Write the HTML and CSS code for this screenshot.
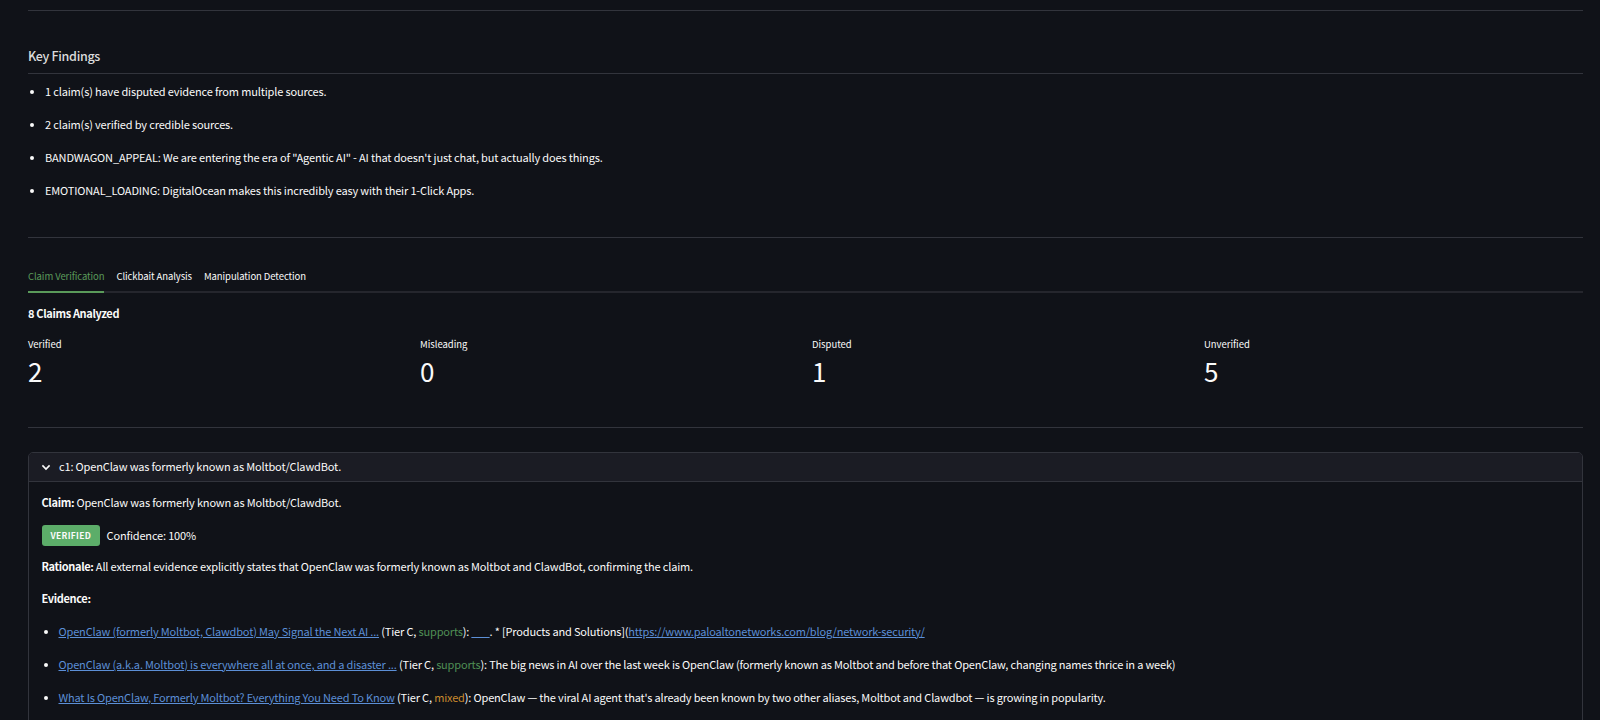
FILE: index.html
```html
<!DOCTYPE html>
<html lang="en">
<head>
<meta charset="utf-8">
<title>Analysis</title>
<link rel="stylesheet" href="styles.css">
</head>
<body>
<div class="page">
  <hr class="rule first">
  <h3 class="section">Key Findings</h3>
  <ul class="list findings">
    <li>1 claim(s) have disputed evidence from multiple sources.</li>
    <li>2 claim(s) verified by credible sources.</li>
    <li>BANDWAGON_APPEAL: We are entering the era of "Agentic AI" - AI that doesn't just chat, but actually does things.</li>
    <li>EMOTIONAL_LOADING: DigitalOcean makes this incredibly easy with their 1-Click Apps.</li>
  </ul>
  <hr class="rule mid">
  <div class="tabs">
    <span class="tab active">Claim Verification</span>
    <span class="tab">Clickbait Analysis</span>
    <span class="tab">Manipulation Detection</span>
  </div>
  <p class="count">8 Claims Analyzed</p>
  <div class="metrics">
    <div><div class="label">Verified</div><div class="value">2</div></div>
    <div><div class="label">Misleading</div><div class="value">0</div></div>
    <div><div class="label">Disputed</div><div class="value">1</div></div>
    <div><div class="label">Unverified</div><div class="value">5</div></div>
  </div>
  <hr class="rule low">
  <div class="expander">
    <div class="exp-head">
      <svg class="chev" viewBox="0 0 12 12" width="12" height="12"><path d="M2.4 4.4 6 8l3.6-3.6" fill="none" stroke="#fafafa" stroke-width="1.6"/></svg>
      <span>c1: OpenClaw was formerly known as Moltbot/ClawdBot.</span>
    </div>
    <div class="exp-body">
      <p><b>Claim:</b> OpenClaw was formerly known as Moltbot/ClawdBot.</p>
      <p class="verdict"><span class="badge">VERIFIED</span><span>Confidence: 100%</span></p>
      <p><b>Rationale:</b> All external evidence explicitly states that OpenClaw was formerly known as Moltbot and ClawdBot, confirming the claim.</p>
      <p class="ev-title"><b>Evidence:</b></p>
      <ul class="list evidence">
        <li><a href="#">OpenClaw (formerly Moltbot, Clawdbot) May Signal the Next AI ...</a> (Tier C, <span class="sup">supports</span>): <a href="#">___</a>. * [Products and Solutions](<a href="#">https://www.paloaltonetworks.com/blog/network-security/</a></li>
        <li><a href="#">OpenClaw (a.k.a. Moltbot) is everywhere all at once, and a disaster ...</a> (Tier C, <span class="sup">supports</span>): The big news in AI over the last week is OpenClaw (formerly known as Moltbot and before that OpenClaw, changing names thrice in a week)</li>
        <li><a href="#">What Is OpenClaw, Formerly Moltbot? Everything You Need To Know</a> (Tier C, <span class="mix">mixed</span>): OpenClaw — the viral AI agent that's already been known by two other aliases, Moltbot and Clawdbot — is growing in popularity.</li>
      </ul>
    </div>
  </div>
</div>
</body>
</html>
```
FILE: styles.css
```css
html, body { margin: 0; height: 720px; overflow: hidden; background: #101218; }
body { font-family: "Noto Sans CJK SC", "Noto Sans", sans-serif; color: #fafafa; font-size: 11px; letter-spacing: -.155px; line-height: 21px; }
.page { padding: 10px 17px 0 28px; }
.rule { border: 0; border-top: 1px solid #32343c; margin: 0; }
.section { font-size: 12.5px; letter-spacing: -.32px; line-height: 20px; font-weight: 500; color: #dcdcdc; margin: 35px 0 0; padding-bottom: 7px; border-bottom: 1px solid #32343c; }
.list { margin: 0; padding-left: 17px; }
.list li { margin-bottom: 12px; }
.findings { margin-top: 7px; }
.mid { margin-top: 36px; }
.tabs { display: flex; gap: 12px; margin-top: 29px; border-bottom: 2px solid #25262d; font-size: 9.5px; letter-spacing: -.08px; line-height: 18px; }
.tab { padding: 0 0 6px; }
.tab.active { color: #5a9a5a; border-bottom: 2px solid #5a9a5a; margin-bottom: -2px; }
.count { font-weight: 700; letter-spacing: -.35px; margin: 10px 0 0; }
.metrics { display: grid; grid-template-columns: repeat(4, 1fr); gap: 13px; margin-top: 10px; }
.label { font-size: 9.5px; letter-spacing: -.02px; line-height: 20px; }
.value { font-size: 26px; letter-spacing: 0; line-height: 34px; }
.low { margin-top: 39px; }
.expander { margin-top: 24px; border: 1px solid #32343c; border-radius: 5px; height: 300px; }
.exp-head { display: flex; align-items: center; gap: 7px; background: #1b1c24; height: 27px; padding: 0 0 1px 11px; border-bottom: 1px solid #32343c; border-radius: 4px 4px 0 0; }
.exp-body { padding: 10px 12.5px; letter-spacing: -.165px; }
.exp-body p { margin: 0 0 10.5px; }
.exp-body b { letter-spacing: -.35px; }
.verdict { display: flex; align-items: center; gap: 6.5px; margin-top: 11.5px !important; }
.ev-title { margin-bottom: 12.5px !important; }
.badge { background: #5cad69; font-size: 8.5px; font-weight: 700; line-height: 15px; padding: 3px 9px; border-radius: 3px; letter-spacing: .3px; }
a { color: #5c8fd6; }
.sup { color: #4f8f55; }
.mix { color: #c98a2e; }
```
